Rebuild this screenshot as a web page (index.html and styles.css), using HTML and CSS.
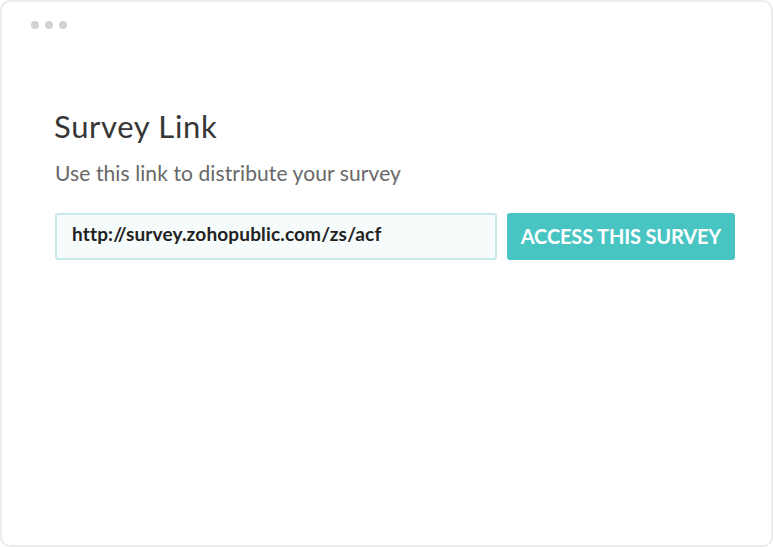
FILE: index.html
```html
<!DOCTYPE html>
<html>
<head>
<meta charset="utf-8">
<link rel="stylesheet" href="styles.css">
</head>
<body>
<div class="window">
  <div class="titlebar">
    <span class="dot"></span><span class="dot"></span><span class="dot"></span>
  </div>
  <div class="content">
    <h1 class="title">Survey Link</h1>
    <p class="subtitle">Use this link to distribute your survey</p>
    <div class="row">
      <div class="link-field">http://survey.zohopublic.com/zs/acf</div>
      <button class="access-btn">ACCESS THIS SURVEY</button>
    </div>
  </div>
</div>
</body>
</html>
```
FILE: styles.css
```css
* { box-sizing: border-box; }
html, body { margin: 0; padding: 0; background: #ffffff; }
body { width: 773px; height: 547px; font-family: Lato, "Open Sans", sans-serif; }
.window {
  width: 773px;
  height: 547px;
  border: 2px solid #ececec;
  border-radius: 10px;
  background: #fff;
}
.titlebar {
  display: flex;
  gap: 6px;
  padding: 19px 0 0 29px;
}
.dot {
  width: 8px;
  height: 8px;
  border-radius: 50%;
  background: #d2d2d2;
}
.content {
  padding: 79px 0 0 52px;
}
.title {
  margin: 0;
  font-size: 31px;
  font-weight: 400;
  color: #363636;
  line-height: 36px;
  letter-spacing: 0.65px;
}
.subtitle {
  margin: 17px 0 0 1px;
  font-size: 21px;
  color: #686868;
  line-height: 24px;
  letter-spacing: 0.1px;
}
.row {
  display: flex;
  gap: 10px;
  margin-top: 28px;
  margin-left: 1px;
}
.link-field {
  width: 442px;
  height: 47px;
  border: 2px solid #c4eaea;
  border-radius: 3px;
  background: #f6fbfb;
  padding: 0 15px 6px;
  display: flex;
  align-items: center;
  font-size: 19px;
  font-weight: 700;
  letter-spacing: 0.15px;
  color: #222;
}
.access-btn {
  width: 228px;
  height: 47px;
  border: none;
  border-radius: 3px;
  background: #48c5c2;
  color: #fff;
  font-family: Lato, "Open Sans", sans-serif;
  font-size: 20px;
  font-weight: 700;
  letter-spacing: -0.15px;
  padding: 0 0 2px;
}
```
